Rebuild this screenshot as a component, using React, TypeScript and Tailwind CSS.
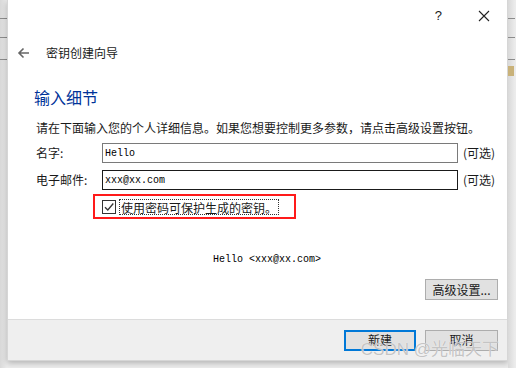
import React from "react";

const cjk = "font-['Microsoft_YaHei','Noto_Sans_CJK_SC',sans-serif]";
const mono = "font-['Liberation_Mono','Noto_Sans_CJK_SC',monospace]";

function Strip({ right }: { right?: boolean }) {
  return (
    <div className="w-[7px] h-full flex flex-col bg-gradient-to-r from-[#d9d9d9] to-[#ececec]">
      <div className="h-[19px] border-b border-[#8c8c8c]" />
      <div className="h-[19px] border-b border-[#8c8c8c]" />
      <div className="h-[22px] border-b border-[#8c8c8c]" />
      {right && <div className="mt-[6px] h-[10px] w-[6px] bg-[#c9b27a]" />}
    </div>
  );
}

function Field({ label, value, dark }: { label: string; value: string; dark?: boolean }) {
  return (
    <div className="flex items-center h-[20px]">
      <span className="w-[66px] text-[12px] text-[#1a1a1a]">{label}</span>
      <div
        className={`w-[356px] h-[20px] border ${dark ? "border-[#1a1a1a]" : "border-[#7a7a7a]"} flex items-center pl-[2px] ${mono} text-[10px] text-black`}
      >
        {value}
      </div>
      <span className="ml-[5px] text-[12px] text-[#1a1a1a]">(可选)</span>
    </div>
  );
}

export default function App() {
  return (
    <div className={`w-[516px] h-[368px] bg-[#ececec] flex overflow-hidden ${cjk}`}>
      <Strip />
      <div className="w-[501px] h-[361px] bg-white flex flex-col shadow-[0_2px_6px_rgba(0,0,0,0.25)] border-x border-b border-[#d6d6d6]">
        <div className="h-[31px] flex items-center justify-end text-[#1a1a1a]">
          <span className="text-[13px] font-['Liberation_Sans'] mr-[36px]">?</span>
          <svg width="12" height="12" viewBox="0 0 12 12" className="mr-[17px]">
            <path d="M1 1L11 11M11 1L1 11" stroke="#222" strokeWidth="1.1" />
          </svg>
        </div>
        <div className="mt-[7px] h-[30px] flex items-center">
          <svg width="13" height="12" viewBox="0 0 13 12" className="ml-[9px]">
            <path d="M12 6H2M6.5 1.5L2 6l4.5 4.5" stroke="#666" strokeWidth="1.6" fill="none" />
          </svg>
          <span className="ml-[16px] text-[12px] text-[#1a1a1a]">密钥创建向导</span>
        </div>
        <div className="pl-[26px] flex flex-col flex-1">
          <div className="mt-[19px] h-[20px] leading-[20px] text-[16px] text-[#003399]">输入细节</div>
          <div className="mt-[13px] pl-[2px] h-[16px] leading-[16px] text-[12px] text-[#1a1a1a] whitespace-nowrap">
            请在下面输入您的个人详细信息。如果您想要控制更多参数，请点击高级设置按钮。
          </div>
          <div className="pl-[2px] mt-[7px] flex flex-col gap-[7px]">
            <Field label="名字:" value="Hello" />
            <Field label="电子邮件:" value="xxx@xx.com" dark />
          </div>
          <div className="mt-[4px] ml-[59px] w-[203px] h-[25px] border-2 border-[#ff1a1a] flex items-center pl-[7px]">
            <div className="w-[14px] h-[14px] border border-[#333] flex items-center justify-center">
              <svg width="12" height="12" viewBox="0 0 12 12">
                <path d="M2 6.2L4.8 9 10.3 2.5" stroke="#333" strokeWidth="1.3" fill="none" />
              </svg>
            </div>
            <span className="ml-[3px] px-[1px] h-[16px] leading-[15px] border border-dotted border-[#333] text-[12px] text-[#1a1a1a] whitespace-nowrap">
              使用密码可保护生成的密钥。
            </span>
          </div>
          <div className={`mt-[35px] ml-[179px] text-[10px] leading-[12px] text-black ${mono}`}>
            Hello &lt;xxx@xx.com&gt;
          </div>
          <div className="mt-[13px] self-end mr-[9px] w-[73px] h-[21px] bg-[#e1e1e1] border border-[#adadad] text-[12px] text-[#1a1a1a] flex items-center justify-center">
            高级设置...
          </div>
        </div>
        <div className="relative h-[41px] bg-[#efefef] border-t border-[#dcdcdc] flex items-center justify-end gap-[9px] pr-[9px]">
          <div className="w-[72px] h-[21px] bg-[#e1e1e1] border-2 border-[#0078d7] text-[12px] text-[#1a1a1a] flex items-center justify-center">
            新建
          </div>
          <div className="w-[73px] h-[21px] bg-[#e1e1e1] border border-[#adadad] text-[12px] text-[#1a1a1a] flex items-center justify-center">
            取消
          </div>
          <span className="absolute right-[8px] bottom-[-2px] text-[17px] text-[#b5b5b5]/80 font-['Liberation_Sans','Noto_Sans_CJK_SC',sans-serif] [text-shadow:0_0_1px_#fff] whitespace-nowrap">
            CSDN @光临天下
          </span>
        </div>
      </div>
      <Strip right />
    </div>
  );
}
